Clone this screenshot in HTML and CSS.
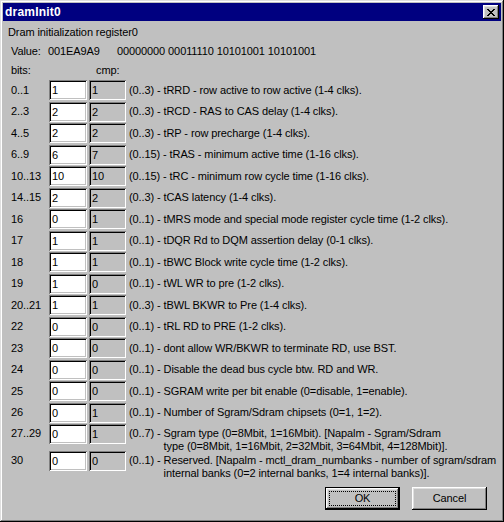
FILE: index.html
```html
<!DOCTYPE html>
<html>
<head>
<meta charset="utf-8">
<link rel="stylesheet" href="styles.css">
</head>
<body>
<div class="window">
  <div class="titlebar">
    <span class="title">dramInit0</span>
    <span class="close">
      <svg width="8" height="7" viewBox="0 0 8 7" shape-rendering="crispEdges">
        <path d="M0 0h2v1H0zM6 0h2v1H6zM1 1h2v1H1zM5 1h2v1H5zM2 2h4v1H2zM3 3h2v1H3zM2 4h4v1H2zM1 5h2v1H1zM5 5h2v1H5zM0 6h2v1H0zM6 6h2v1H6z" fill="#000"/>
      </svg>
    </span>
  </div>
  <div class="content">
    <div class="caption">Dram initialization register0</div>
    <div class="value"><span class="v-label">Value:</span><span class="v-hex">001EA9A9</span><span class="v-bin">00000000 00011110 10101001 10101001</span></div>
    <div class="heads"><span class="h-bits">bits:</span><span class="h-cmp">cmp:</span></div>
    <div class="rows">
      <div class="row"><span class="bits">0..1</span><span class="edit">1</span><span class="edit ro">1</span><div class="desc"><span class="pre">(0..3) -&nbsp;</span><span class="txt">tRRD - row active to row active (1-4 clks).</span></div></div>
      <div class="row"><span class="bits">2..3</span><span class="edit">2</span><span class="edit ro">2</span><div class="desc"><span class="pre">(0..3) -&nbsp;</span><span class="txt">tRCD - RAS to CAS delay (1-4 clks).</span></div></div>
      <div class="row"><span class="bits">4..5</span><span class="edit">2</span><span class="edit ro">2</span><div class="desc"><span class="pre">(0..3) -&nbsp;</span><span class="txt">tRP - row precharge (1-4 clks).</span></div></div>
      <div class="row"><span class="bits">6..9</span><span class="edit">6</span><span class="edit ro">7</span><div class="desc"><span class="pre">(0..15) -&nbsp;</span><span class="txt">tRAS - minimum active time (1-16 clks).</span></div></div>
      <div class="row"><span class="bits">10..13</span><span class="edit">10</span><span class="edit ro">10</span><div class="desc"><span class="pre">(0..15) -&nbsp;</span><span class="txt">tRC - minimum row cycle time (1-16 clks).</span></div></div>
      <div class="row"><span class="bits">14..15</span><span class="edit">2</span><span class="edit ro">2</span><div class="desc"><span class="pre">(0..3) -&nbsp;</span><span class="txt">tCAS latency (1-4 clks).</span></div></div>
      <div class="row"><span class="bits">16</span><span class="edit">0</span><span class="edit ro">1</span><div class="desc"><span class="pre">(0..1) -&nbsp;</span><span class="txt">tMRS mode and special mode register cycle time (1-2 clks).</span></div></div>
      <div class="row"><span class="bits">17</span><span class="edit">1</span><span class="edit ro">1</span><div class="desc"><span class="pre">(0..1) -&nbsp;</span><span class="txt">tDQR Rd to DQM assertion delay (0-1 clks).</span></div></div>
      <div class="row"><span class="bits">18</span><span class="edit">1</span><span class="edit ro">1</span><div class="desc"><span class="pre">(0..1) -&nbsp;</span><span class="txt">tBWC Block write cycle time (1-2 clks).</span></div></div>
      <div class="row"><span class="bits">19</span><span class="edit">1</span><span class="edit ro">0</span><div class="desc"><span class="pre">(0..1) -&nbsp;</span><span class="txt">tWL WR to pre (1-2 clks).</span></div></div>
      <div class="row"><span class="bits">20..21</span><span class="edit">1</span><span class="edit ro">1</span><div class="desc"><span class="pre">(0..3) -&nbsp;</span><span class="txt">tBWL BKWR to Pre (1-4 clks).</span></div></div>
      <div class="row"><span class="bits">22</span><span class="edit">0</span><span class="edit ro">0</span><div class="desc"><span class="pre">(0..1) -&nbsp;</span><span class="txt">tRL RD to PRE (1-2 clks).</span></div></div>
      <div class="row"><span class="bits">23</span><span class="edit">0</span><span class="edit ro">0</span><div class="desc"><span class="pre">(0..1) -&nbsp;</span><span class="txt">dont allow WR/BKWR to terminate RD, use BST.</span></div></div>
      <div class="row"><span class="bits">24</span><span class="edit">0</span><span class="edit ro">0</span><div class="desc"><span class="pre">(0..1) -&nbsp;</span><span class="txt">Disable the dead bus cycle btw. RD and WR.</span></div></div>
      <div class="row"><span class="bits">25</span><span class="edit">0</span><span class="edit ro">0</span><div class="desc"><span class="pre">(0..1) -&nbsp;</span><span class="txt">SGRAM write per bit enable (0=disable, 1=enable).</span></div></div>
      <div class="row"><span class="bits">26</span><span class="edit">0</span><span class="edit ro">1</span><div class="desc"><span class="pre">(0..1) -&nbsp;</span><span class="txt">Number of Sgram/Sdram chipsets (0=1, 1=2).</span></div></div>
      <div class="row tall"><span class="bits">27..29</span><span class="edit">0</span><span class="edit ro">1</span><div class="desc"><span class="pre">(0..7) -&nbsp;</span><span class="txt">Sgram type (0=8Mbit, 1=16Mbit). [Napalm - Sgram/Sdram<br>type (0=8Mbit, 1=16Mbit, 2=32Mbit, 3=64Mbit, 4=128Mbit)].</span></div></div>
      <div class="row tall"><span class="bits">30</span><span class="edit">0</span><span class="edit ro">0</span><div class="desc"><span class="pre">(0..1) -&nbsp;</span><span class="txt">Reserved. [Napalm - mctl_dram_numbanks - number of sgram/sdram<br>internal banks (0=2 internal banks, 1=4 internal banks)].</span></div></div>
    </div>
    <div class="buttons">
      <span class="btn default"><span class="focus">OK</span></span>
      <span class="btn">Cancel</span>
    </div>
  </div>
</div>
</body>
</html>
```

FILE: styles.css
```css
* { box-sizing: border-box; }
html, body { margin: 0; padding: 0; }
body {
  width: 504px;
  height: 522px;
  background: #c0c0c0;
  font-family: "Liberation Sans", Arial, sans-serif;
  font-size: 11px;
  letter-spacing: -0.1px;
  color: #000;
  overflow: hidden;
}
.window {
  width: 504px;
  height: 522px;
  padding: 3px;
  background: #c0c0c0;
  box-shadow: inset -1px -1px #000, inset 1px 1px #dfdfdf, inset -2px -2px #808080, inset 2px 2px #fff;
  display: flex;
  flex-direction: column;
}
.titlebar {
  height: 18px;
  background: #000080;
  color: #fff;
  display: flex;
  align-items: center;
  justify-content: space-between;
  padding: 0 2px 0 2px;
}
.title {
  font-weight: bold;
  font-size: 12px;
  letter-spacing: 0.2px;
}
.close {
  width: 16px;
  height: 14px;
  background: #c0c0c0;
  box-shadow: inset -1px -1px #000, inset 1px 1px #fff, inset -2px -2px #808080, inset 2px 2px #dfdfdf;
  display: flex;
  align-items: center;
  justify-content: center;
  padding-right: 1px;
}
.close svg { display: block; }
.content {
  flex: 1;
  display: flex;
  flex-direction: column;
  line-height: 13px;
}
.caption {
  margin-top: 5px;
  padding-left: 5px;
}
.value {
  margin-top: 6px;
  padding-left: 8px;
  display: flex;
}
.v-label { width: 37px; }
.v-hex { width: 69px; }
.heads {
  margin-top: 6px;
  padding-left: 8px;
  display: flex;
}
.h-bits { width: 85px; }
.rows {
  margin-top: 3px;
  display: flex;
  flex-direction: column;
  gap: 1.5px;
}
.row {
  display: grid;
  grid-template-columns: 37px 38px 38px 1fr;
  column-gap: 1px;
  padding-left: 8px;
  align-items: center;
  height: 20px;
}
.row .edit:nth-child(3) { margin-left: 1px; }
.row.tall {
  height: 25.5px;
  align-items: start;
}
.row.tall .bits { padding-top: 3px; }
.row.tall .desc { padding-top: 3px; }
.edit {
  height: 20px;
  background: #fff;
  box-shadow: inset 1px 1px #808080, inset -1px -1px #fff, inset 2px 2px #000, inset -2px -2px #c0c0c0;
  padding: 4px 0 0 3px;
  line-height: 13px;
}
.edit.ro { background: #c0c0c0; }
.desc {
  display: flex;
  padding-left: 2px;
  white-space: nowrap;
}
.buttons {
  margin-top: auto;
  margin-bottom: 9px;
  display: flex;
  justify-content: flex-end;
  gap: 12px;
  padding-right: 14px;
}
.btn {
  width: 75px;
  height: 23px;
  background: #c0c0c0;
  box-shadow: inset -1px -1px #000, inset 1px 1px #fff, inset -2px -2px #808080, inset 2px 2px #dfdfdf;
  display: flex;
  align-items: center;
  justify-content: center;
}
.btn.default {
  box-shadow: inset 0 0 0 1px #000, inset -2px -2px #000, inset 2px 2px #fff, inset -3px -3px #808080, inset 3px 3px #dfdfdf;
  padding: 4px;
}
.focus {
  flex: 1;
  align-self: stretch;
  border: 1px dotted #000;
  display: flex;
  align-items: center;
  justify-content: center;
}
```
